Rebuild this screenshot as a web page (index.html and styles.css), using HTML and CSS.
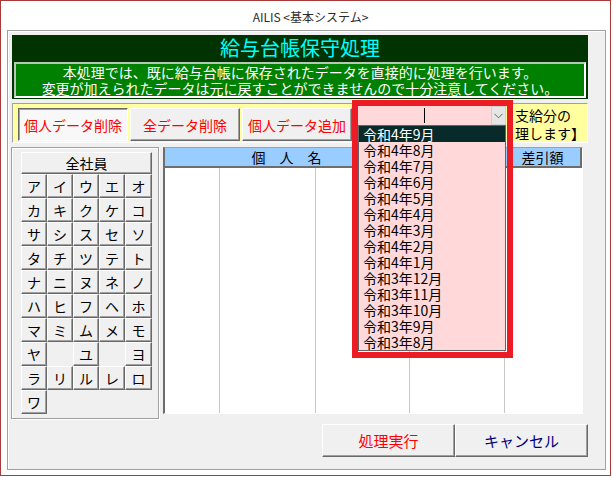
FILE: index.html
```html
<!DOCTYPE html>
<html lang="ja">
<head>
<meta charset="utf-8">
<title>AILIS</title>
<link rel="stylesheet" href="styles.css">
</head>
<body>
<div class="window">
  <div class="titlebar">AILIS &lt;基本システム&gt;</div>
  <div class="panel">
    <div class="banner">
      <div class="banner-title">給与台帳保守処理</div>
      <div class="banner-msg">
        <div>本処理では、既に給与台帳に保存されたデータを直接的に処理を行います。</div>
        <div>変更が加えられたデータは元に戻すことができませんので十分注意してください。</div>
      </div>
    </div>
    <div class="toolbar">
      <button class="btn tool pressed">個人データ削除</button>
      <button class="btn tool">全データ削除</button>
      <button class="btn tool">個人データ追加</button>
      <div class="combo-wrap">
        <div class="combo">
          <div class="combo-text"><span class="caret"></span></div>
          <div class="combo-arrow"><svg width="9" height="6" viewBox="0 0 9 6"><polyline points="0.5,0.8 4.5,4.8 8.5,0.8" fill="none" stroke="#666" stroke-width="1"/></svg></div>
        </div>
        <ul class="combo-list">
          <li class="selected">令和4年9月</li>
          <li>令和4年8月</li>
          <li>令和4年7月</li>
          <li>令和4年6月</li>
          <li>令和4年5月</li>
          <li>令和4年4月</li>
          <li>令和4年3月</li>
          <li>令和4年2月</li>
          <li>令和4年1月</li>
          <li>令和3年12月</li>
          <li>令和3年11月</li>
          <li>令和3年10月</li>
          <li>令和3年9月</li>
          <li>令和3年8月</li>
        </ul>
        <div class="highlight"></div>
      </div>
      <div class="period-label">支給分の<br>理します】</div>
    </div>
    <div class="main">
      <div class="kana-panel">
        <button class="btn all">全社員</button>
        <div class="kana-grid">
          <button class="btn kana">ア</button><button class="btn kana">イ</button><button class="btn kana">ウ</button><button class="btn kana">エ</button><button class="btn kana">オ</button>
          <button class="btn kana">カ</button><button class="btn kana">キ</button><button class="btn kana">ク</button><button class="btn kana">ケ</button><button class="btn kana">コ</button>
          <button class="btn kana">サ</button><button class="btn kana">シ</button><button class="btn kana">ス</button><button class="btn kana">セ</button><button class="btn kana">ソ</button>
          <button class="btn kana">タ</button><button class="btn kana">チ</button><button class="btn kana">ツ</button><button class="btn kana">テ</button><button class="btn kana">ト</button>
          <button class="btn kana">ナ</button><button class="btn kana">ニ</button><button class="btn kana">ヌ</button><button class="btn kana">ネ</button><button class="btn kana">ノ</button>
          <button class="btn kana">ハ</button><button class="btn kana">ヒ</button><button class="btn kana">フ</button><button class="btn kana">ヘ</button><button class="btn kana">ホ</button>
          <button class="btn kana">マ</button><button class="btn kana">ミ</button><button class="btn kana">ム</button><button class="btn kana">メ</button><button class="btn kana">モ</button>
          <button class="btn kana">ヤ</button><span class="blank"></span><button class="btn kana">ユ</button><span class="blank"></span><button class="btn kana">ヨ</button>
          <button class="btn kana">ラ</button><button class="btn kana">リ</button><button class="btn kana">ル</button><button class="btn kana">レ</button><button class="btn kana">ロ</button>
          <button class="btn kana">ワ</button>
        </div>
      </div>
      <div class="table">
        <div class="thead">
          <div class="th">個　人　名</div>
          <div class="th"></div>
          <div class="th">差引額</div>
        </div>
        <div class="tbody">
          <div class="col c1"></div>
          <div class="col c2"></div>
          <div class="col c3"></div>
          <div class="col c4"></div>
          <div class="col c5"></div>
        </div>
      </div>
    </div>
    <div class="actions">
      <button class="btn action run">処理実行</button>
      <button class="btn action cancel">キャンセル</button>
    </div>
  </div>
</div>
</body>
</html>
```

FILE: styles.css
```css
* { box-sizing: border-box; }
html, body { margin: 0; padding: 0; background: #fff; }
body {
  font-family: "Noto Sans CJK JP", "Noto Sans", sans-serif;
  font-size: 14px;
  color: #000;
}
.window {
  width: 611px;
  height: 476px;
  border: 1px solid #a93a3a;
  display: flex;
  flex-direction: column;
}
.titlebar {
  height: 29px;
  padding: 3px 0 0 10px;
  line-height: 26px;
  text-align: center;
  font-size: 12px;
  color: #2b2b2b;
}
.panel {
  flex: 1;
  margin: 0 4px 5px 6px;
  background: #f0f0f0;
  border: 1px solid #a0a0a0;
  box-shadow: inset 1px 1px 0 #fff;
  padding: 4px 17px 0 4px;
  display: flex;
  flex-direction: column;
}
.banner {
  height: 64px;
  background: #003300;
  padding-bottom: 1px;
}
.banner-title {
  height: 27px;
  line-height: 25px;
  text-align: center;
  color: #00ffff;
  font-size: 20px;
}
.banner-msg {
  margin: 0 2px;
  height: 36px;
  background: #008000;
  border: 2px solid;
  border-color: #b8c8b8 #ffffff #ffffff #b8c8b8;
  color: #fff;
  text-align: center;
  font-size: 14px;
  line-height: 16px;
}
.btn {
  font-family: inherit;
  padding: 0;
  margin: 0;
  background: #f0f0f0;
  border: 1px solid;
  border-color: #ffffff #696969 #696969 #ffffff;
  box-shadow: inset -1px -1px 0 #a0a0a0;
  color: #000;
  cursor: default;
}
.toolbar {
  margin-top: 4px;
  height: 40px;
  background: #ffffa0;
  border: 1px solid;
  border-color: #a0a0a0 #ffffff #ffffff #a0a0a0;
  padding: 4px 0 0 5px;
  display: flex;
  align-items: flex-start;
  gap: 2px;
}
.tool {
  width: 110px;
  height: 33px;
  color: #ff0000;
  font-size: 14px;
}
.tool.pressed {
  background: #f8f8f8;
  border-color: #696969 #ffffff #ffffff #696969;
  box-shadow: inset 1px 1px 0 #a0a0a0;
}
.combo-wrap {
  position: relative;
  width: 148px;
  height: 19px;
  margin: -2px 0 0 4px;
  z-index: 5;
}
.combo {
  display: flex;
  height: 19px;
  background: #ffd9d9;
}
.combo-text {
  flex: 1;
  display: flex;
  align-items: center;
  justify-content: center;
}
.caret {
  display: block;
  width: 1px;
  height: 15px;
  background: #000;
}
.combo-arrow {
  width: 15px;
  height: 19px;
  background: #e6e6e6;
  border: 1px solid #d0d0d0;
  display: flex;
  align-items: center;
  justify-content: center;
}
.combo-list {
  position: absolute;
  top: 19px;
  left: 0;
  width: 148px;
  margin: 0;
  padding: 0;
  list-style: none;
  background: #ffd9d9;
  border: 1px solid #646464;
}
.combo-list li {
  height: 16px;
  line-height: 16px;
  padding-left: 4px;
  font-size: 14px;
}
.combo-list li.selected {
  background: #082a2a;
  color: #fff;
}
.highlight {
  position: absolute;
  left: -6px;
  top: -6px;
  width: 161px;
  height: 258px;
  border: 6px solid #ed1c24;
  pointer-events: none;
}
.period-label {
  margin: -2px 0 0 7px;
  line-height: 18px;
  font-size: 14px;
  white-space: nowrap;
}
.main {
  margin: 4px 0 0 -1px;
  display: flex;
  align-items: flex-start;
  gap: 4px;
}
.kana-panel {
  width: 148px;
  height: 272px;
  border: 1px solid #a0a0a0;
  box-shadow: 1px 1px 0 #fff, inset 1px 1px 0 #fff;
  padding: 4px 0 0 9px;
}
.all {
  display: block;
  width: 131px;
  height: 22px;
  font-size: 14px;
}
.kana-grid {
  display: grid;
  grid-template-columns: 26px 26px 26px 26px 27px;
  grid-auto-rows: 24px;
}
.kana {
  font-size: 14px;
  line-height: 1;
}
.table {
  width: 420px;
  height: 267px;
  background: #fff;
  border-left: 2px solid #6d6d6d;
  border-top: 1px solid #a0a0a0;
  border-right: 1px solid #fff;
  border-bottom: 1px solid #fff;
  display: flex;
  flex-direction: column;
}
.thead {
  display: grid;
  grid-template-columns: 245px 95px 77px;
  height: 20px;
}
.th {
  background: #99ccff;
  border-right: 2px solid #6d6d6d;
  border-bottom: 2px solid #6d6d6d;
  text-align: center;
  line-height: 18px;
  font-size: 14px;
}
.tbody {
  flex: 1;
  display: flex;
}
.col { border-right: 1px solid #c8c8c8; }
.c1 { width: 55px; }
.c2 { width: 96px; }
.c3 { width: 94px; }
.c4 { width: 95px; }
.c5 { width: 77px; border-right: none; }
.actions {
  margin-top: 5px;
  display: flex;
  justify-content: flex-end;
}
.action {
  width: 133px;
  height: 33px;
  font-size: 15px;
}
.run { color: #ff0000; }
.cancel { color: #000080; }
```
